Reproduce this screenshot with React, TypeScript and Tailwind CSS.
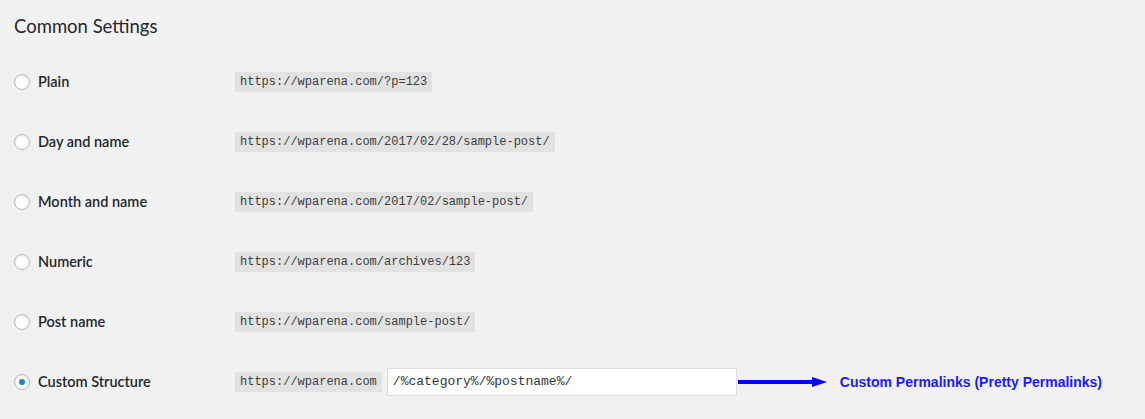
import React from "react";

const rows = [
  { label: "Plain", url: "https://wparena.com/?p=123" },
  { label: "Day and name", url: "https://wparena.com/2017/02/28/sample-post/" },
  { label: "Month and name", url: "https://wparena.com/2017/02/sample-post/" },
  { label: "Numeric", url: "https://wparena.com/archives/123" },
  { label: "Post name", url: "https://wparena.com/sample-post/" },
];

function Radio({ checked }: { checked?: boolean }) {
  return (
    <span className="flex h-4 w-4 shrink-0 items-center justify-center rounded-full border border-[#b4b9be] bg-white shadow-[inset_0_1px_2px_rgba(0,0,0,0.1)]">
      {checked && <span className="h-[6px] w-[6px] rounded-full bg-[#1e8cbe]" />}
    </span>
  );
}

const code = "bg-[#e2e2e2] px-[5px] h-5 flex items-center text-[12px] text-[#3c3c3c] font-['Liberation_Mono',monospace]";

export default function App() {
  return (
    <div className="h-[419px] w-[1145px] overflow-hidden bg-[#f1f1f1] pl-[14px] font-['Lato',sans-serif] text-[#23282d]">
      <h2 className="pt-[14px] text-[18.5px] leading-[24px] font-normal">Common Settings</h2>
      <div className="mt-[14px] flex flex-col">
        {rows.map((r) => (
          <div key={r.label} className="flex h-[60px] items-center">
            <div className="flex w-[221px] items-center gap-2">
              <Radio />
              <span className="text-[14.5px] leading-5 font-semibold">{r.label}</span>
            </div>
            <span className={code}>{r.url}</span>
          </div>
        ))}
        <div className="flex h-[60px] items-center">
          <div className="flex w-[221px] items-center gap-2">
            <Radio checked />
            <span className="text-[14.5px] leading-5 font-semibold">Custom Structure</span>
          </div>
          <span className={code}>https://wparena.com</span>
          <div className="ml-[5px] flex h-7 w-[350px] items-center border border-[#ddd] bg-white px-[5px] text-[13px] text-[#32373c] font-['Liberation_Mono',monospace]">
            /%category%/%postname%/
          </div>
          <svg width="90" height="12" viewBox="0 0 90 12" className="ml-[1px]">
            <line x1="0" y1="6" x2="76" y2="6" stroke="#0000ff" strokeWidth="4" />
            <polygon points="74,1 89,6 74,11" fill="#0000ff" />
          </svg>
          <span className="ml-[12px] text-[14px] font-bold text-[#1a1aff] font-['Liberation_Sans',Arial,sans-serif]">
            Custom Permalinks (Pretty Permalinks)
          </span>
        </div>
      </div>
    </div>
  );
}
